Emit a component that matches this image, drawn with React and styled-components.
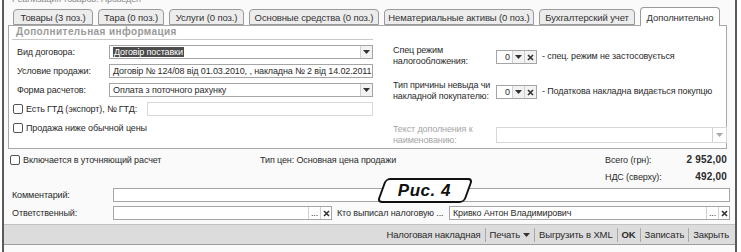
import React from 'react';
import styled, { createGlobalStyle } from 'styled-components';

const GlobalStyle = createGlobalStyle`
  html, body { margin: 0; padding: 0; background: #fff; }
  body { font-family: "Liberation Sans", Arial, sans-serif; font-size: 9px; color: #2a2a2a; letter-spacing: -0.12px; }
  * { box-sizing: border-box; }
`;

const Frame = styled.div`
  position: relative;
  width: 735px;
  height: 252px;
  margin-left: 2px;
  border-left: 2px solid #5a5a5a;
  border-right: 2px solid #5a5a5a;
  background: #fafafa;
  display: flex;
  flex-direction: column;
  overflow: hidden;
`;

const TitleStub = styled.div`
  height: 4px;
  overflow: hidden;
  padding-left: 8px;
  display: flex;
  align-items: flex-end;
  color: #8a8a8a;
  line-height: 9px;
`;

const TabBar = styled.div`
  display: flex;
  align-items: flex-end;
  gap: 5px;
  height: 21px;
  padding-left: 9px;
`;

const Tab = styled.div`
  position: relative;
  z-index: ${p => (p.$active ? 2 : 0)};
  width: ${p => p.$w}px;
  height: ${p => (p.$active ? 19 : 16)}px;
  margin-bottom: ${p => (p.$active ? -1 : 0)}px;
  border: 1px solid #9a9a9a;
  border-bottom: ${p => (p.$active ? 'none' : '1px solid #9a9a9a')};
  border-radius: 4px 4px 0 0;
  background: ${p => (p.$active ? '#fff' : '#ececec')};
  display: flex;
  align-items: center;
  justify-content: center;
  white-space: nowrap;
  color: #333;
  font-size: 9.5px;
`;

const Panel = styled.div`
  position: relative;
  z-index: 1;
  margin-left: 4px;
  width: 719px;
  height: 124px;
  border: 1px solid #a8a8a8;
  background: #fff;
  display: grid;
  grid-template-columns: 364px 1fr;
  padding-left: 3px;
`;

const LeftCol = styled.div`
  display: flex;
  flex-direction: column;
  gap: 5px;
`;

const SectionTitle = styled.div`
  height: 14px;
  padding-left: 4px;
  border-bottom: 1px solid #c8c8c8;
  color: #9a9a9a;
  font-weight: bold;
  font-size: 10px;
  letter-spacing: 0.4px;
  line-height: 12px;
  width: 361px;
`;

const FormRow = styled.div`
  display: flex;
  align-items: center;
  height: 14px;
  width: 361px;
`;

const Label = styled.div`
  width: ${p => p.$w}px;
  padding-left: ${p => p.$pl || 0}px;
  flex-shrink: 0;
  white-space: nowrap;
  color: ${p => (p.$muted ? '#a0a0a0' : '#2a2a2a')};
`;

const Field = styled.div`
  flex: ${p => (p.$w ? '0 0 auto' : 1)};
  width: ${p => (p.$w ? `${p.$w}px` : 'auto')};
  height: ${p => p.$h || 14}px;
  border: 1px solid ${p => (p.$disabled ? '#d8d8d8' : '#a5a5a5')};
  background: #fff;
  display: flex;
  align-items: center;
  overflow: hidden;
  white-space: nowrap;
`;

const FieldText = styled.div`
  flex: 1;
  padding: 0 3px;
  overflow: hidden;
  text-align: ${p => (p.$right ? 'right' : 'left')};
`;

const Selected = styled.span`
  background: #4b4b4b;
  color: #fff;
  padding: 0 1px;
`;

const FieldBtn = styled.div`
  width: ${p => p.$w || 12}px;
  height: 100%;
  border-left: 1px solid #d0d0d0;
  background: ${p => (p.$plain ? '#fff' : '#f2f2f2')};
  display: flex;
  align-items: center;
  justify-content: center;
  color: #333;
  flex-shrink: 0;
`;

const CheckBox = styled.span`
  width: 10px;
  height: 10px;
  border: 1px solid #555;
  border-radius: 2px;
  background: #fff;
  margin-right: 3px;
  flex-shrink: 0;
`;

const CheckLine = styled.div`
  display: flex;
  align-items: center;
  padding-left: ${p => p.$pl || 1}px;
  white-space: nowrap;
  width: ${p => (p.$w ? `${p.$w}px` : 'auto')};
  flex-shrink: 0;
`;

const RightCol = styled.div`
  padding-left: 17px;
  padding-top: 19px;
  display: flex;
  flex-direction: column;
`;

const RightRow = styled.div`
  display: flex;
  align-items: center;
  margin-top: ${p => p.$mt || 0}px;
`;

const RLabel = styled.div`
  width: 103px;
  flex-shrink: 0;
  line-height: 11px;
  white-space: nowrap;
  color: ${p => (p.$muted ? '#a5a5a5' : '#2a2a2a')};
`;

const Note = styled.div`
  margin-left: 5px;
  white-space: nowrap;
`;

const Segmented = styled.div`
  display: flex;
  height: 14px;
  border: 1px solid #a5a5a5;
  background: #fff;
  margin-top: 2px;
`;

const SegValue = styled.div`
  width: 15px;
  text-align: right;
  padding-right: 2px;
  line-height: 12px;
`;

const Totals = styled.div`
  display: flex;
  align-items: center;
  height: 17px;
  padding-right: 8px;
  margin-top: ${p => p.$mt || 0}px;
`;

const TypeText = styled.div`
  flex: 1;
  white-space: nowrap;
`;

const TotalLabel = styled.div`
  width: 65px;
  white-space: nowrap;
`;

const TotalValue = styled.div`
  width: 57px;
  text-align: right;
  font-weight: bold;
  font-size: 10px;
  letter-spacing: 0.2px;
`;

const BottomRow = styled.div`
  display: flex;
  align-items: center;
  height: 14px;
  padding-right: 5px;
  margin-top: ${p => p.$mt || 0}px;
`;

const MidText = styled.div`
  width: 117px;
  padding-left: 5px;
  white-space: nowrap;
  overflow: hidden;
  flex-shrink: 0;
`;

const Toolbar = styled.div`
  margin-top: 4px;
  height: 21px;
  background: #dcdcdc;
  border-top: 1px solid #c2c2c2;
  border-bottom: 1px solid #9c9c9c;
  display: flex;
  align-items: center;
  justify-content: flex-end;
  padding-right: 2px;
`;

const ToolButton = styled.div`
  padding: 0 4px;
  white-space: nowrap;
  display: flex;
  align-items: center;
  gap: 3px;
  font-size: 9.5px;
  font-weight: ${p => (p.$bold ? 'bold' : 'normal')};
  color: #2a2a2a;
`;

const Separator = styled.div`
  width: 1px;
  height: 14px;
  background: #a8a8a8;
`;

const FigTag = styled.div`
  position: absolute;
  left: 377px;
  top: 178px;
  width: 88px;
  height: 25px;
  border: 2px solid #111;
  border-radius: 5px;
  background: #fff;
  transform: skewX(-20deg);
  display: flex;
  align-items: center;
  justify-content: center;
  z-index: 5;
`;

const FigText = styled.span`
  transform: skewX(20deg);
  font-family: "Liberation Sans", Arial, sans-serif;
  font-weight: bold;
  font-style: italic;
  font-size: 17px;
  letter-spacing: 0.5px;
  color: #111;
`;

const Arrow = ({ color = '#333' }) => (
  <svg width="7" height="4" viewBox="0 0 7 4">
    <path d="M0 0 H7 L3.5 4 Z" fill={color} />
  </svg>
);

const Cross = () => (
  <svg width="7" height="7" viewBox="0 0 7 7">
    <path d="M1 1 L6 6 M6 1 L1 6" stroke="#333" strokeWidth="1.6" />
  </svg>
);

const tabs = [
  ['Товары (3 поз.)', 80],
  ['Тара (0 поз.)', 66],
  ['Услуги (0 поз.)', 75],
  ['Основные средства (0 поз.)', 130],
  ['Нематериальные активы (0 поз.)', 150],
  ['Бухгалтерский учет', 96],
  ['Дополнительно', 80, true],
];

const SmallCombo = ({ value }) => (
  <Segmented>
    <SegValue>{value}</SegValue>
    <FieldBtn $w={12}><Arrow /></FieldBtn>
    <FieldBtn $w={12}><Cross /></FieldBtn>
  </Segmented>
);

export default function App() {
  return (
    <>
      <GlobalStyle />
      <Frame>
        <TitleStub>Реализация товаров: Проведен</TitleStub>
        <TabBar>
          {tabs.map(([t, w, a]) => (
            <Tab key={t} $w={w} $active={a}>{t}</Tab>
          ))}
        </TabBar>
        <Panel>
          <LeftCol>
            <SectionTitle>Дополнительная информация</SectionTitle>
            <FormRow>
              <Label $w={97} $pl={5}>Вид договора:</Label>
              <Field>
                <FieldText><Selected>Договір поставки</Selected></FieldText>
                <FieldBtn><Arrow /></FieldBtn>
              </Field>
            </FormRow>
            <FormRow>
              <Label $w={97} $pl={5}>Условие продажи:</Label>
              <Field>
                <FieldText>Договір № 124/08 від 01.03.2010, , накладна № 2 від 14.02.2011</FieldText>
              </Field>
            </FormRow>
            <FormRow>
              <Label $w={97} $pl={5}>Форма расчетов:</Label>
              <Field>
                <FieldText>Оплата з поточного рахунку</FieldText>
                <FieldBtn><Arrow /></FieldBtn>
              </Field>
            </FormRow>
            <FormRow>
              <CheckLine $w={135}><CheckBox />Есть ГТД (экспорт), № ГТД:</CheckLine>
              <Field $disabled />
            </FormRow>
            <FormRow>
              <CheckLine><CheckBox />Продажа ниже обычной цены</CheckLine>
            </FormRow>
          </LeftCol>
          <RightCol>
            <RightRow>
              <RLabel>Спец режим<br />налогообложения:</RLabel>
              <SmallCombo value="0" />
              <Note>- спец. режим не застосовується</Note>
            </RightRow>
            <RightRow $mt={13}>
              <RLabel>Тип причины невыда чи<br />накладной покупателю:</RLabel>
              <SmallCombo value="0" />
              <Note>- Податкова накладна видається покупцю</Note>
            </RightRow>
            <RightRow $mt={22}>
              <RLabel $muted>Текст дополнения к<br />наименованию:</RLabel>
              <Field $w={231} $h={16} $disabled>
                <FieldText />
                <FieldBtn $plain $w={14}><Arrow color="#aaa" /></FieldBtn>
              </Field>
            </RightRow>
          </RightCol>
        </Panel>

        <Totals $mt={2}>
          <CheckLine $pl={6} $w={256}><CheckBox />Включается в уточняющий расчет</CheckLine>
          <TypeText>Тип цен: Основная цена продажи</TypeText>
          <TotalLabel>Всего (грн):</TotalLabel>
          <TotalValue>2 952,00</TotalValue>
        </Totals>
        <Totals>
          <TypeText />
          <TotalLabel>НДС (сверху):</TotalLabel>
          <TotalValue>492,00</TotalValue>
        </Totals>

        <BottomRow $mt={3}>
          <Label $w={109} $pl={8}>Комментарий:</Label>
          <Field />
        </BottomRow>
        <BottomRow $mt={4}>
          <Label $w={109} $pl={8}>Ответственный:</Label>
          <Field $w={219}>
            <FieldText />
            <FieldBtn $plain $w={12}>...</FieldBtn>
            <FieldBtn $plain $w={11}><Cross /></FieldBtn>
          </Field>
          <MidText>Кто выписал налоговую ...</MidText>
          <Field>
            <FieldText>Кривко Антон Владимирович</FieldText>
            <FieldBtn $plain $w={12}>...</FieldBtn>
            <FieldBtn $plain $w={11}><Cross /></FieldBtn>
          </Field>
        </BottomRow>

        <Toolbar>
          <ToolButton>Налоговая накладная</ToolButton>
          <Separator />
          <ToolButton>Печать <Arrow /></ToolButton>
          <Separator />
          <ToolButton>Выгрузить в XML</ToolButton>
          <Separator />
          <ToolButton $bold>OK</ToolButton>
          <Separator />
          <ToolButton>Записать</ToolButton>
          <Separator />
          <ToolButton>Закрыть</ToolButton>
        </Toolbar>

        <FigTag><FigText>Рис. 4</FigText></FigTag>
      </Frame>
    </>
  );
}
